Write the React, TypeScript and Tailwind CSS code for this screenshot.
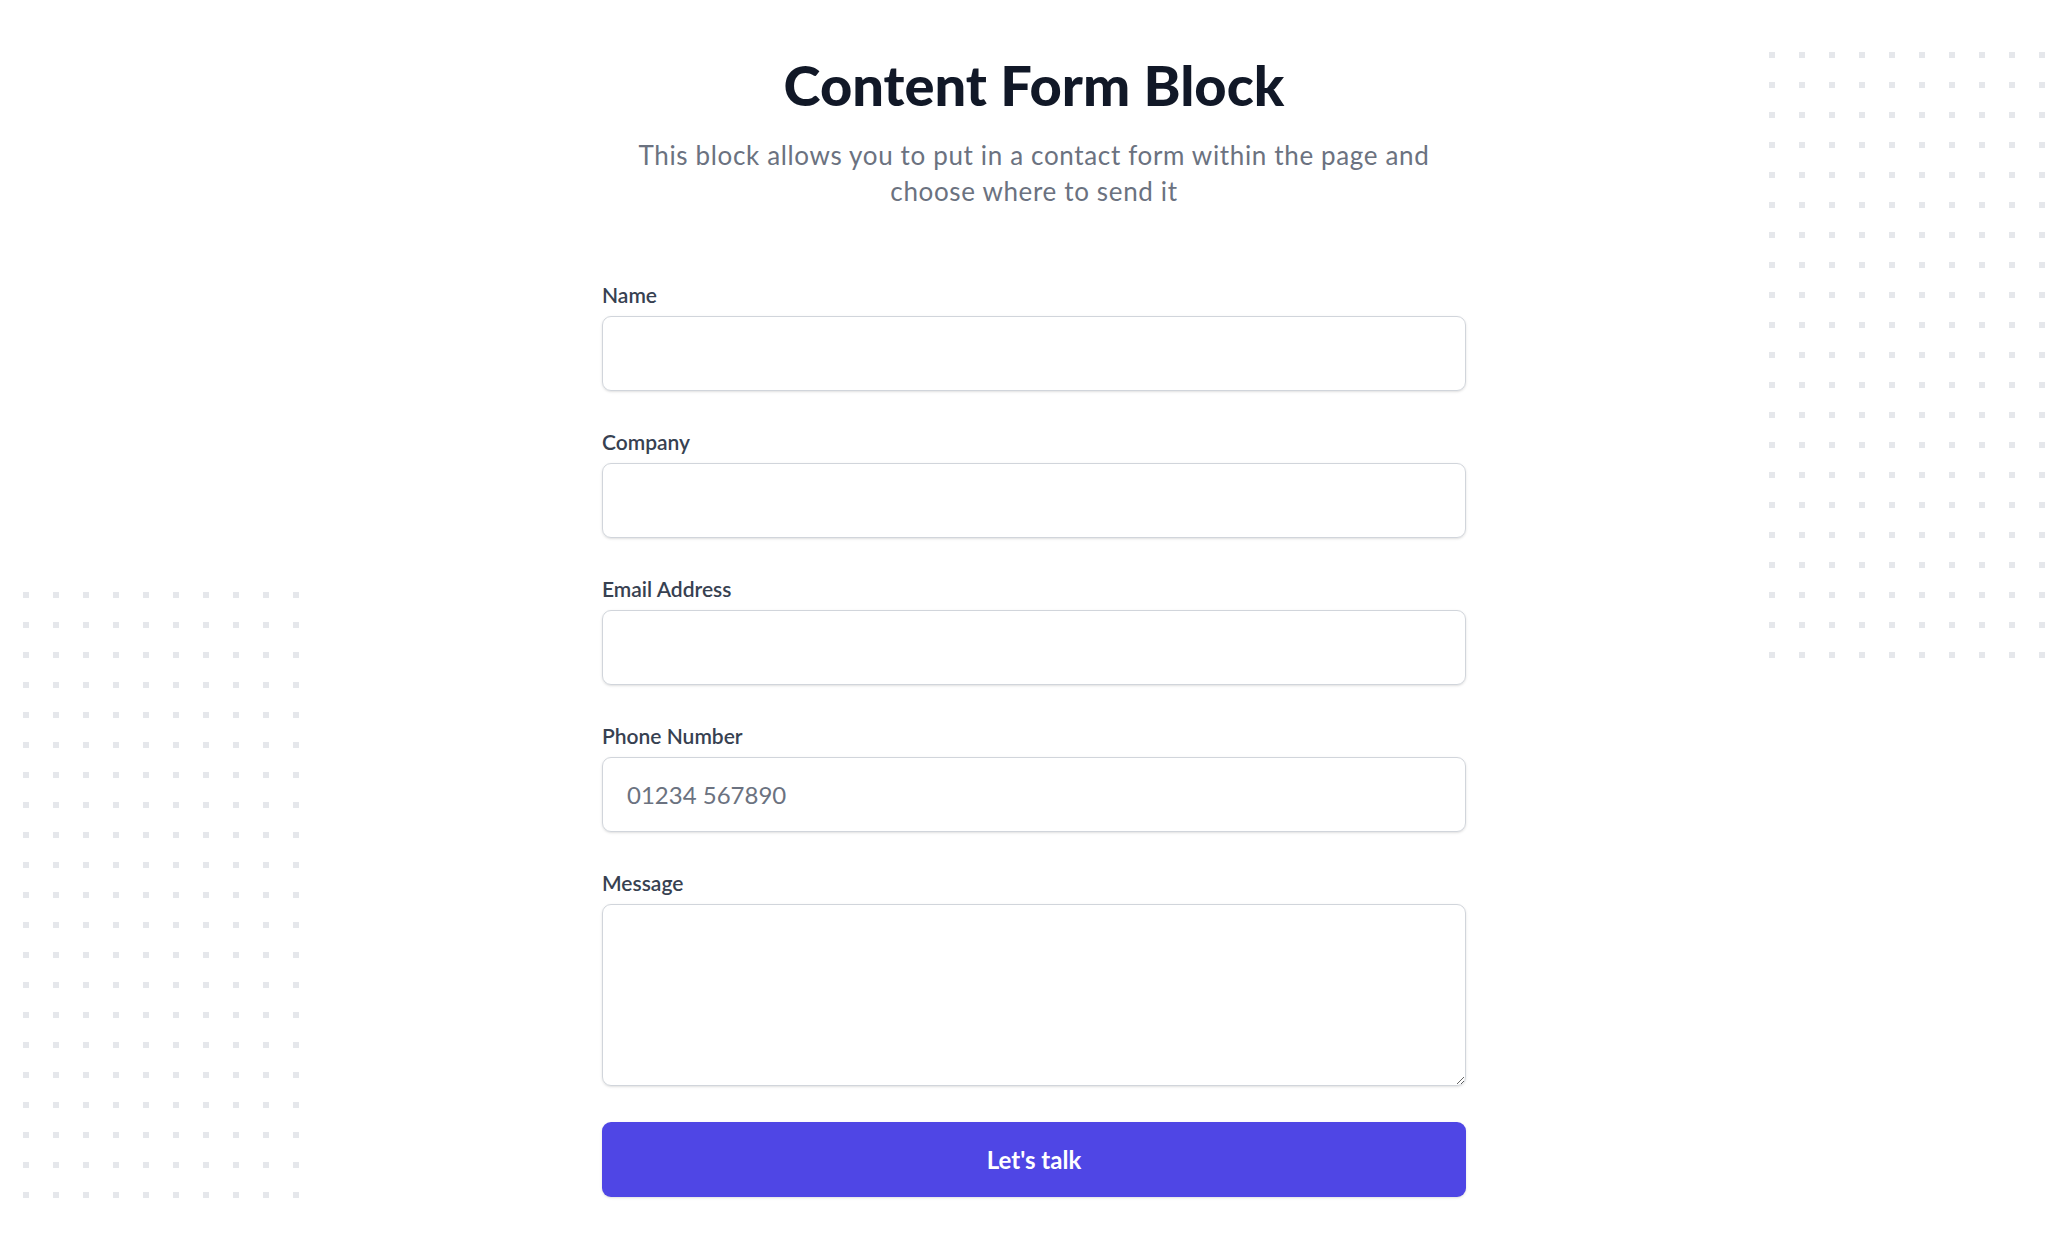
import React from 'react';

const DotPattern = ({ id, className }: { id: string; className: string }) => (
  <svg className={className} width={606} height={606} fill="none" viewBox="0 0 606 606" aria-hidden="true">
    <defs>
      <pattern id={id} x={0} y={0} width={30} height={30} patternUnits="userSpaceOnUse">
        <rect x={0} y={0} width={6} height={6} fill="#e5e7eb" />
      </pattern>
    </defs>
    <rect width={606} height={606} fill={`url(#${id})`} />
  </svg>
);

const fields = [
  { id: 'name', label: 'Name', type: 'text', placeholder: '' },
  { id: 'company', label: 'Company', type: 'text', placeholder: '' },
  { id: 'email', label: 'Email Address', type: 'email', placeholder: '' },
  { id: 'phone', label: 'Phone Number', type: 'tel', placeholder: '01234 567890' },
];

const App = () => {
  return (
    <div
      className="relative min-h-screen overflow-hidden bg-white"
      style={{ fontFamily: 'Lato, "Open Sans", sans-serif' }}
    >
      <DotPattern id="dots-right" className="absolute top-[52px] left-[calc(50%+738px)]" />
      <DotPattern id="dots-left" className="absolute top-[592px] left-[calc(50%-1338px)]" />

      <div className="relative mx-auto max-w-[870px] pl-[6px] pt-[55px] pb-10">
        <div className="text-center">
          <h1 className="text-[56px] leading-[60px] font-black text-[#111827]">
            Content Form Block
          </h1>
          <p className="mx-auto mt-[22px] max-w-[830px] text-[26px] leading-[36px] tracking-[0.025em] text-[#6b7280]">
            This block allows you to put in a contact form within the page and choose where to send it
          </p>
        </div>

        <form className="mt-[71px] grid grid-cols-1 gap-y-[36px]" onSubmit={(e) => e.preventDefault()}>
          {fields.map((f) => (
            <div key={f.id}>
              <label htmlFor={f.id} className="block text-[21px] leading-[30px] font-semibold text-[#374151]">
                {f.label}
              </label>
              <input
                id={f.id}
                name={f.id}
                type={f.type}
                placeholder={f.placeholder}
                className="mt-[6px] block h-[75px] w-full rounded-[9px] border border-[#d1d5db] px-6 text-[24px] text-[#111827] shadow-sm placeholder:text-[#6b7280] focus:outline-none"
              />
            </div>
          ))}

          <div>
            <label htmlFor="message" className="block text-[21px] leading-[30px] font-semibold text-[#374151]">
              Message
            </label>
            <textarea
              id="message"
              name="message"
              rows={4}
              className="mt-[6px] block h-[182px] w-full rounded-[9px] border border-[#d1d5db] px-6 py-[18px] text-[24px] text-[#111827] shadow-sm focus:outline-none"
            />
          </div>

          <div>
            <button
              type="submit"
              className="flex h-[75px] w-full items-center justify-center rounded-[9px] bg-[#4f46e5] text-[24px] font-bold text-white shadow-sm"
            >
              Let's talk
            </button>
          </div>
        </form>
      </div>
    </div>
  );
};

export default App;
